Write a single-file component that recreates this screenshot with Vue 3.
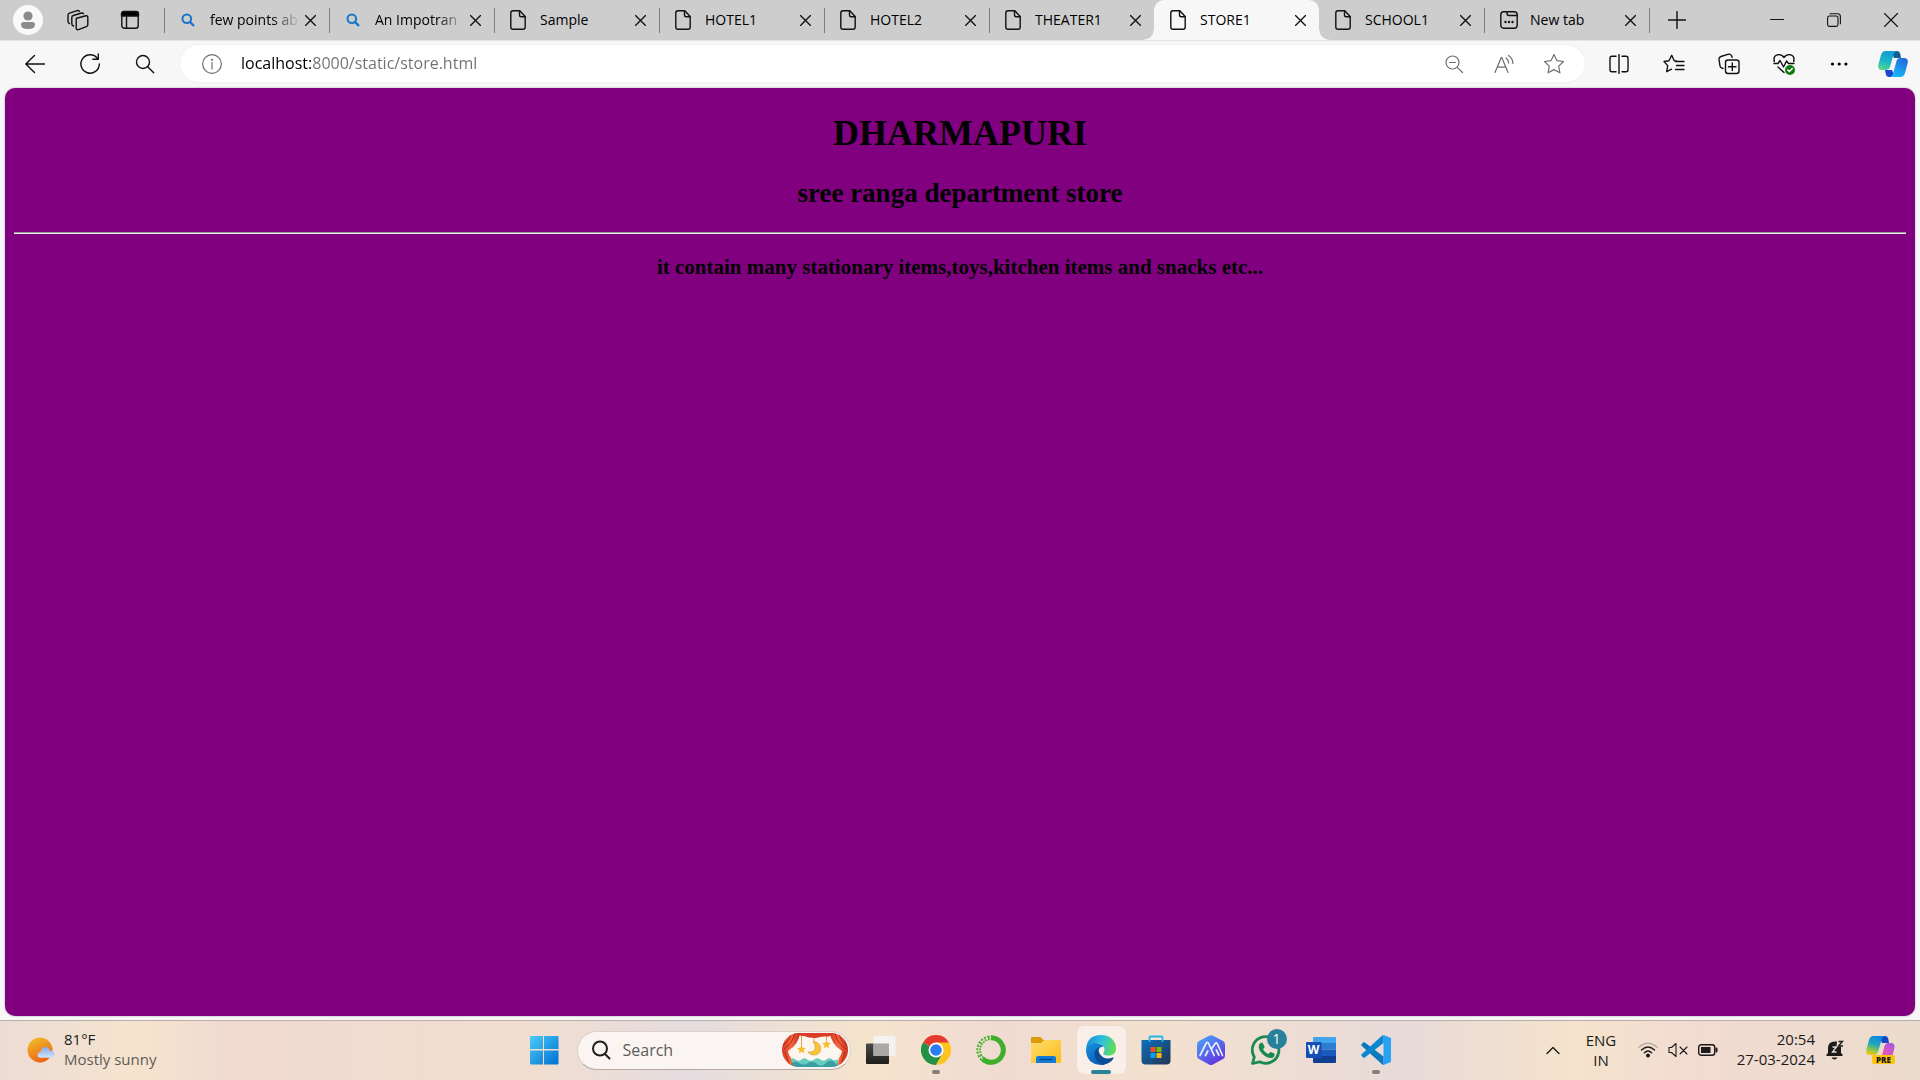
<script setup>
import { ref } from 'vue'

const tabs = ref([
  { title: 'few points ab', kind: 'search' },
  { title: 'An Impotran', kind: 'search' },
  { title: 'Sample', kind: 'file' },
  { title: 'HOTEL1', kind: 'file' },
  { title: 'HOTEL2', kind: 'file' },
  { title: 'THEATER1', kind: 'file' },
  { title: 'STORE1', kind: 'file', active: true },
  { title: 'SCHOOL1', kind: 'file' },
  { title: 'New tab', kind: 'new' }
])

const address = ref('localhost:8000/static/store.html')
const query = ref('')
</script>

<template>
  <div class="screen">
    <header class="tabstrip">
      <button class="strip-btn profile" aria-label="Profile">
        <svg width="30" height="30" viewBox="0 0 30 30">
          <circle cx="15" cy="15" r="15" fill="#f9f9f9" />
          <circle cx="15" cy="11" r="4.6" fill="#8b8b8b" />
          <path d="M8 19.5Q8 17 10.500 17h9Q22 17 22 19.500Q22 24 15 24T8 19.500Z" fill="#8b8b8b" />
        </svg>
      </button>
      <button class="strip-btn workspaces" aria-label="Workspaces">
        <svg class="line" width="22" height="22" viewBox="0 0 22 22">
          <path d="M9.500 9.200 19 6.800q1.800-.3 1.800 1.500v7.500q0 1.400-1.400 1.900l-8 2.900q-2 .5-2.200-1.500V11q0-1.400.3-1.800Z" />
          <path d="M6.500 17q-1.700-.4-1.700-2.200V8.600q0-1.700 1.500-2.100L14.500 4q1.300-.3 2 .7" />
          <path d="M2.500 14.500Q1 14 1 12.300V6.300q0-1.700 1.500-2.200L10 1.600q1.500-.4 2.400.6" />
        </svg>
      </button>
      <button class="strip-btn actions" aria-label="Tab actions menu">
        <svg class="line" width="20" height="20" viewBox="0 0 20 20">
          <rect x="1.800" y="1.800" width="16.400" height="16.400" rx="2.500" />
          <path d="M1.500 6V4Q1.500 1.500 4 1.500h12Q18.500 1.500 18.500 4v2Z" fill="#000" />
          <path d="M6.500 6v12" />
        </svg>
      </button>

      <nav class="tabs" aria-label="Open tabs">
        <div v-for="tab in tabs" :key="tab.title" class="tab" :class="{ active: tab.active }">
          <svg v-if="tab.kind === 'search'" class="favicon" width="16" height="20" viewBox="0 0 16 20">
            <circle cx="6.800" cy="8.800" r="4.300" fill="none" stroke="#1673cf" stroke-width="2" />
            <path d="m10 12 4 4" stroke="#1673cf" stroke-width="2.400" />
          </svg>
          <svg v-else-if="tab.kind === 'file'" class="favicon line" width="16" height="20" viewBox="0 0 16 20">
            <path d="M3 .8h6.800l5.400 5.600V17q0 2.200-2.200 2.200H3Q.8 19.200.8 17V3Q.8.800 3 .8Z" />
            <path d="M9.500 1v4q0 1.800 1.800 1.800H15" />
          </svg>
          <svg v-else class="favicon new line" width="18" height="20" viewBox="0 0 18 20">
            <rect x=".8" y="1.800" width="16.400" height="16.400" rx="3" />
            <path d="M7 2v1.500Q7 5.500 9 5.500h8" />
            <g fill="#111" stroke="none"><circle cx="5.500" cy="12" r="1.200" /><circle cx="9" cy="12" r="1.200" /><circle cx="12.500" cy="12" r="1.200" /></g>
          </svg>
          <span class="tab-title">{{ tab.title }}</span>
          <button class="tab-close" :aria-label="'Close ' + tab.title">
            <svg class="line" width="11" height="11" viewBox="0 0 11 11"><path d="m.5.5 10 10m0-10-10 10" /></svg>
          </button>
        </div>
      </nav>

      <button class="strip-btn new-tab" aria-label="New tab">
        <svg class="line" width="18" height="18" viewBox="0 0 18 18"><path d="M9 .5v17M.5 9h17" /></svg>
      </button>
      <div class="window-controls">
        <button aria-label="Minimize">
          <svg class="line thin" width="14" height="14" viewBox="0 0 14 14"><path d="M.5 6.500h13" /></svg>
        </button>
        <button aria-label="Restore">
          <svg class="line thin" width="14" height="14" viewBox="0 0 14 14">
            <rect x=".6" y="3" width="10.400" height="10.400" rx="1.800" />
            <path d="M3 .8h7.500q2.900 0 2.900 2.900v7" />
          </svg>
        </button>
        <button aria-label="Close window">
          <svg class="line thin" width="14" height="14" viewBox="0 0 14 14"><path d="m.5.5 13 13m0-13-13 13" /></svg>
        </button>
      </div>
    </header>

    <div class="toolbar">
      <button class="tool" aria-label="Back">
        <svg class="line" width="20" height="20" viewBox="0 0 20 20"><path d="M19.500 10H.8M9.500 1.500.8 10l8.700 8.500" /></svg>
      </button>
      <button class="tool" aria-label="Refresh">
        <svg class="line" width="22" height="22" viewBox="0 0 22 22">
          <path d="M18.500 5.500A9.200 9.200 0 1 0 20.300 11" /><path d="M19.300 1v5.200h-5.500" />
        </svg>
      </button>
      <button class="tool" aria-label="Search the web">
        <svg class="line" width="20" height="20" viewBox="0 0 20 20"><circle cx="8" cy="8" r="6.500" /><path d="m12.700 12.700 6 6" /></svg>
      </button>

      <div class="omnibox">
        <button class="info" aria-label="View site information">
          <svg class="line grey" width="22" height="22" viewBox="0 0 22 22">
            <circle cx="11" cy="11" r="9.300" /><path d="M11 9.500v6.500" /><circle cx="11" cy="6.800" r=".5" />
          </svg>
        </button>
        <input v-model="address" class="address" type="text" aria-label="Address bar" spellcheck="false" />
        <button aria-label="Zoom out">
          <svg class="line grey" width="20" height="20" viewBox="0 0 20 20">
            <circle cx="8.500" cy="8.500" r="6.500" /><path d="m13.300 13.300 5.200 5.200M5.500 8.500h6" />
          </svg>
        </button>
        <button aria-label="Read aloud">
          <svg class="line grey" width="22" height="20" viewBox="0 0 22 20">
            <path d="M2 18.500 8.200 3.500h.6l6.200 15M4.500 13.200h8.300" />
            <path d="M13 4q2.500 1.700 2.700 5M15.500 1.500Q19.700 4.300 20 9.500" />
          </svg>
        </button>
        <button aria-label="Add to favorites">
          <svg class="line grey" width="22" height="22" viewBox="0 0 22 22">
            <path d="m11 1.500 2.900 6.100 6.600.9-4.800 4.600 1.200 6.700-5.900-3.200-5.900 3.200 1.200-6.700L1.500 8.500l6.600-.9Z" />
          </svg>
        </button>
      </div>

      <button class="tool" aria-label="Split screen">
        <svg class="line" width="20" height="20" viewBox="0 0 20 20">
          <path d="M7 2.300H3Q1 2.300 1 4.300v11.400q0 2 2 2h4M13 2.300h4q2 0 2 2v11.400q0 2-2 2h-4M10 .5v19" />
        </svg>
      </button>
      <button class="tool" aria-label="Favorites">
        <svg class="line" width="22" height="22" viewBox="0 0 22 22">
          <path d="m13.500 8-2.300-.3L8.700 2.300 6 7.700l-5 .8 3.700 4.100-1 6.100 4.800-2.500M12.500 8.500H21M13.500 12.500H21M12.500 16.500H21M13.500 8l-1 .5" />
        </svg>
      </button>
      <button class="tool" aria-label="Collections">
        <svg class="line" width="22" height="22" viewBox="0 0 22 22">
          <rect x="7.500" y="7" width="13.500" height="13.500" rx="2.500" />
          <path d="M14.300 10v7.500M10.500 13.800H18M5 15.500l-1.500-.6q-1.200-.7-1.500-2L1 6.500Q.7 4.200 3 3.500L10.500 1.200q2-.4 2.900 1.300l.7 1.800" />
        </svg>
      </button>
      <button class="tool" aria-label="Browser essentials">
        <svg class="line" width="22" height="22" viewBox="0 0 22 22">
          <path d="M1.300 8.500Q0 3 4.300 1.800 8.500.8 11 4.500 13.500.8 17.700 1.800 22 3 20.700 8.500M5 14l6 5.500" />
          <path d="M1 10.500h4l2-3 3.500 6.500 3-6 2 2.500H21" />
          <circle cx="17" cy="17" r="5" fill="#107c10" stroke="none" />
          <path d="m14.700 17 1.700 1.600 2.900-3.100" stroke="#fff" />
        </svg>
      </button>
      <button class="tool" aria-label="Settings and more">
        <svg width="18" height="6" viewBox="0 0 18 6"><circle cx="2.500" cy="3" r="1.600" /><circle cx="9.200" cy="3" r="1.600" /><circle cx="15.900" cy="3" r="1.600" /></svg>
      </button>
      <button class="tool copilot" aria-label="Copilot">
        <svg width="30" height="28" viewBox="0 0 30 28">
          <defs>
            <linearGradient id="cpLeft" x1=".6" y1="0" x2=".3" y2="1"><stop offset="0" stop-color="#109bd8" /><stop offset=".55" stop-color="#1cb5c8" /><stop offset="1" stop-color="#58d68d" /></linearGradient>
            <linearGradient id="cpRight" x1=".8" y1="0" x2=".3" y2="1"><stop offset="0" stop-color="#2268dc" /><stop offset="1" stop-color="#19baf8" /></linearGradient>
          </defs>
          <path d="M13 1h6q2.500 0 3.300 3L23 8h-7Z" fill="#125f93" />
          <path d="M7 20h7l3 7h-6q-2.500 0-3.200-3Z" fill="#1a45cf" />
          <path d="M7.500 1H19q-2.500.3-3.300 3.300L12 17q-1 3-4.500 3H4Q-.8 20 .4 14.500L3 5Q4.200 1 7.500 1Z" fill="url(#cpLeft)" />
          <path d="M22.500 27H12q2.300-.4 3-3.300L18.500 11q.9-3 4-3H26q4.800 0 3.600 5.500L27 23q-1.200 4-4.500 4Z" fill="url(#cpRight)" />
        </svg>
      </button>
    </div>

    <main class="page">
      <h1>DHARMAPURI</h1>
      <h2>sree ranga department store</h2>
      <hr />
      <h3>it contain many stationary items,toys,kitchen items and snacks etc...</h3>
    </main>

    <footer class="taskbar">
      <button class="weather">
        <svg width="28" height="28" viewBox="0 0 28 28">
          <defs>
            <linearGradient id="sun" x1=".2" y1="0" x2=".7" y2="1"><stop offset="0" stop-color="#efbd2c" /><stop offset="1" stop-color="#ee5d12" /></linearGradient>
            <linearGradient id="cloud" x1="0" y1="0" x2="0" y2="1"><stop offset="0" stop-color="#84a9ea" /><stop offset="1" stop-color="#d3e4fc" /></linearGradient>
          </defs>
          <circle cx="13" cy="14" r="12.500" fill="url(#sun)" />
          <path d="M13.500 21.800q-3-.2-3-2.800 0-2.500 3.200-2.900Q14.300 11 18.500 11q3.500 0 4.500 3.700 4.600.2 4.600 3.600 0 3.300-3.600 3.500Z" fill="url(#cloud)" />
        </svg>
        <span class="two-line"><span class="temp">81°F</span><span class="sky">Mostly sunny</span></span>
      </button>

      <div class="apps">
        <button class="app" aria-label="Start">
          <svg width="30" height="30" viewBox="0 0 30 30">
            <defs><linearGradient id="win" x1="0" y1="0" x2="30" y2="30" gradientUnits="userSpaceOnUse"><stop offset="0" stop-color="#4bd0fb" /><stop offset="1" stop-color="#006cce" /></linearGradient></defs>
            <path d="M2 1h12v13H1V2Q1 1 2 1Zm13 0h13.500q1 0 1 1v12H15ZM1 15.500h13v14H2q-1 0-1-1Zm14 0h14.500v13q0 1-1 1H15Z" fill="url(#win)" />
          </svg>
        </button>

        <label class="search">
          <svg width="20" height="20" viewBox="0 0 20 20" fill="none" stroke="#1e1e1e" stroke-width="2" stroke-linecap="round">
            <circle cx="9" cy="8.500" r="7" /><path d="m14 14 4.500 4.500" />
          </svg>
          <input v-model="query" type="text" placeholder="Search" aria-label="Search" />
          <svg width="66" height="34" viewBox="0 0 66 34">
            <defs><clipPath id="stage"><rect width="66" height="34" rx="17" /></clipPath>
              <linearGradient id="curtain"><stop offset="0" stop-color="#d93a24" /><stop offset=".5" stop-color="#f6653f" /><stop offset="1" stop-color="#c9301f" /></linearGradient></defs>
            <g clip-path="url(#stage)">
              <rect width="66" height="34" fill="#fdf6ee" />
              <path d="M8 27q3-3.500 6 0 4 2 6-1 3-2 6 1 4 2 7-1 3-2 6 1 4 2 6-1 3-2 6 1 3 1 5-1v9H8Z" fill="#67cbc2" />
              <path d="M8 31q5-4 9-1t9 0 9 1 9-1 9 0 6 1v4H8Z" fill="#3b9ea1" />
              <path d="M19.500 3v10M44.500 3v6M32 3v6" stroke="#d9a45a" />
              <path d="M31 8.500q7 .5 7.800 7-.5 6.500-7.300 6.500-3.500-.2-5.500-3 6.500.8 7.300-4.200.2-3.800-2.300-6.300Z" fill="#f8c53a" stroke="#dd9f24" stroke-width=".7" />
              <path d="m19.500 12 1.300 2.700 3 .4-2.200 2.100.6 3-2.700-1.500-2.700 1.500.6-3-2.200-2.100 3-.4ZM44.500 7l1.300 2.700 3 .4-2.200 2.100.6 3-2.700-1.500-2.700 1.500.6-3-2.200-2.100 3-.4Z" fill="#f8bd2d" />
              <path d="M14 0h38q-1 4-8 3.500Q39 3 34 5 28 5.500 22 3q-6 .5-8-3Z" fill="#dc3d27" />
              <path d="M0 0h18q-1 11-12 18 0 3 3 7l2 9H0Z" fill="url(#curtain)" />
              <path d="M66 0H48q1 11 12 18 0 3-3 7l-2 9h11Z" fill="url(#curtain)" />
              <path d="M13 0Q11 10 2 16M9 0Q8 8 1 12M53 0q2 10 11 16M57 0q1 8 8 12M3 19l5 15M63 19l-5 15" fill="none" stroke="#a92619" stroke-width=".9" />
            </g>
          </svg>
        </label>

        <button class="app" aria-label="Task view">
          <svg width="30" height="30" viewBox="0 0 30 30">
            <defs><linearGradient id="dark" x1="0" y1="0" x2="0" y2="1"><stop offset="0" stop-color="#4a4a48" /><stop offset="1" stop-color="#1e1e1d" /></linearGradient></defs>
            <rect x="0" y="8.500" width="23" height="20.500" rx="1" fill="url(#dark)" />
            <rect x="7.500" y="1" width="22" height="20" rx="1" fill="#f4f4f4" fill-opacity=".9" />
            <rect x="7.500" y="8.500" width="15.500" height="12.500" fill="#aaa9a7" />
          </svg>
        </button>

        <button class="app running" aria-label="Google Chrome">
          <svg width="30" height="30" viewBox="0 0 48 48">
            <path d="M24 24 3.200 12A24 24 0 0 1 44.800 12Z" fill="#e53a2f" />
            <path d="M24 24 3.200 12A24 24 0 0 0 24 48L34.400 30Z" fill="#239145" />
            <path d="M24 12h20.800A24 24 0 0 1 24 48l10.400-18Z" fill="#fcc41f" />
            <circle cx="24" cy="24" r="12" fill="#fff" /><circle cx="24" cy="24" r="9.300" fill="#2b7cf0" />
          </svg>
        </button>

        <button class="app" aria-label="Anaconda Navigator">
          <svg width="30" height="30" viewBox="0 0 30 30" fill="none" stroke="#3eae2b">
            <path d="M15 2.700A12.300 12.300 0 1 1 6.500 23.900" stroke-width="5" />
            <path d="M6.500 23.900A12.300 12.300 0 0 1 15 2.700" stroke-width="4.600" stroke-dasharray="2 1.200" />
            <path d="M6.500 23.900A12.300 12.300 0 0 1 15 2.700" stroke="#f1ddd2" stroke-width="1.200" stroke-dasharray="3 1.600" />
          </svg>
        </button>

        <button class="app" aria-label="File Explorer">
          <svg width="30" height="30" viewBox="0 0 30 30">
            <defs><linearGradient id="folder" x1="0" y1="0" x2="1" y2="1"><stop offset="0" stop-color="#ffdc70" /><stop offset="1" stop-color="#fbbd18" /></linearGradient></defs>
            <path d="M1 2h8.500l3 3H29v6H0V3q0-1 1-1Z" fill="#dc9a08" />
            <path d="M0 8h10l3-3h16q1 0 1 1v21q0 1-1 1H1q-1 0-1-1Z" fill="url(#folder)" />
            <path d="M5 28v-5q0-2 2-2h16q2 0 2 2v5Z" fill="#127bd5" /><path d="M9 24.500h12" stroke="#084a94" stroke-width="1.300" stroke-linecap="round" />
          </svg>
        </button>

        <button class="app current" aria-label="Microsoft Edge">
          <svg width="30" height="30" viewBox="0 0 30 30">
            <defs>
              <linearGradient id="edgeTop" x1="0" y1=".4" x2="1" y2=".6"><stop offset="0" stop-color="#1a8fd6" /><stop offset=".5" stop-color="#2ec1dc" /><stop offset="1" stop-color="#67e04a" /></linearGradient>
              <linearGradient id="edgeLeft" x1="0" y1="0" x2=".5" y2="1"><stop offset="0" stop-color="#1890dc" /><stop offset="1" stop-color="#0a62bd" /></linearGradient>
            </defs>
            <path d="M0 14Q1.200 0 15 0q8 0 12 5t3 10q-1 5.500-7.500 5.500-4.500 0-5.500-2 1.500-1.500 1.500-4 0-5.500-7-6.500Q4 7 0 14Z" fill="url(#edgeTop)" />
            <path d="M0 14Q3 7 10 8q6 .5 8 4-3-1-5 2-2 3-1 8 2 6 7 7.500-2 .5-4 .5Q0 29 0 14Z" fill="url(#edgeLeft)" />
            <path d="M12.500 12.500Q8 15 8.300 19.500 9 27 17 29.800q7-1 10.500-6.300.5-1.500-1-1-5 2-9.500-.3-5-3-4.500-9.700Z" fill="#0d4d96" />
          </svg>
        </button>

        <button class="app" aria-label="Microsoft Store">
          <svg width="30" height="30" viewBox="0 0 30 30">
            <defs><linearGradient id="bag" x1="0" y1="0" x2="1" y2="1"><stop offset="0" stop-color="#0a70bd" /><stop offset="1" stop-color="#253352" /></linearGradient></defs>
            <path d="M.5 5h29v20.500q0 4-4 4h-21q-4 0-4-4Z" fill="url(#bag)" />
            <path d="M8.500 7V2.500q0-1 1-1h11q1 0 1 1V7" fill="none" stroke="#25b5ea" stroke-width="1.800" />
            <path d="M9.500 12h5v5h-5Z" fill="#f25022" /><path d="M15.500 12h5v5h-5Z" fill="#7fba00" />
            <path d="M9.500 18h5v5h-5Z" fill="#00a4ef" /><path d="M15.500 18h5v5h-5Z" fill="#ffb900" />
          </svg>
        </button>

        <button class="app" aria-label="App hub">
          <svg width="30" height="30" viewBox="0 0 30 30">
            <defs><linearGradient id="hex" x1="0" y1="0" x2=".7" y2="1"><stop offset="0" stop-color="#4bacf0" /><stop offset=".5" stop-color="#5472ee" /><stop offset="1" stop-color="#6630e0" /></linearGradient></defs>
            <path d="M13 .7q2-1 4 0l10 5.300q2 1 2 3.500v11q0 2.500-2 3.500l-10 5.400q-2 1-4 0L3 24q-2-1-2-3.500v-11Q1 7 3 6Z" fill="url(#hex)" />
            <path d="M4 20.500 10.300 8q1-1.500 2 0l5.900 12.500M9.500 20.500l2.300-4.500M15.500 14l3.700-5.500q1-1.200 2 0l5.300 12M20.300 15l2.500 5" fill="none" stroke="#e9efff" stroke-width="1.700" stroke-linecap="round" stroke-linejoin="round" />
          </svg>
        </button>

        <button class="app" aria-label="WhatsApp, 1 notification">
          <svg width="30" height="30" viewBox="0 0 30 30">
            <path d="M1.500 28.500 3.300 22A13.300 13.300 0 1 1 8.500 26.800Z" fill="none" stroke="#198a54" stroke-width="2.800" stroke-linejoin="round" />
            <path d="M9.500 8q1.500-1 2.500.5l1.500 3q.2 1-1.500 2.800 2 3.700 5.200 4.700l2-1.800q.6-.4 1.400 0l2.900 1.500q.7 3.800-3.700 4.300-3 .3-7.500-3.300Q8 16 7.700 12q0-3 1.800-4Z" fill="#198a54" />
          </svg>
          <span class="badge">1</span>
        </button>

        <button class="app" aria-label="Word">
          <span class="word">
            <svg width="30" height="28" viewBox="0 0 30 28">
              <path d="M8 1h21q1 0 1 1v5H7V2q0-1 1-1Z" fill="#41a5ee" /><path d="M7 7h23v6.500H7Z" fill="#2b7cd3" />
              <path d="M7 13.500h23V20H7Z" fill="#185abd" /><path d="M7 20h23v6q0 1-1 1H8q-1 0-1-1Z" fill="#103f91" />
              <rect y="6" width="15.500" height="16" rx="1" fill="#164fb3" />
            </svg>
            <b>W</b>
          </span>
        </button>

        <button class="app running" aria-label="Visual Studio Code">
          <svg width="30" height="30" viewBox="0 0 30 30">
            <path d="M22.500 0 30 3v24l-7.500 3Z" fill="#27a2f2" />
            <path d="m3.500 7.200 19 14.300V30q-.8 0-1.500-.7L.6 10.800q-.8-.8 0-1.600l1.600-1.700q.6-.6 1.300-.3Z" fill="#0b79be" />
            <path d="M3.500 22.800 22.500 8V0q-.8 0-1.500.7L.6 19.200q-.8.8 0 1.600l1.600 1.700q.6.600 1.300.3Z" fill="#0b86cf" />
          </svg>
        </button>
      </div>

      <div class="tray">
        <button class="chevron" aria-label="Show hidden icons">
          <svg class="line tray-line" width="14" height="9" viewBox="0 0 14 9"><path d="m1 7.500 6-6 6 6" /></svg>
        </button>
        <button class="lang"><span>ENG</span><span>IN</span></button>
        <button class="status" aria-label="Network">
          <svg class="line tray-line" width="20" height="16" viewBox="0 0 20 16">
            <path d="M.8 5.500q9.200-8.500 18.400 0" stroke="#b9aaa2" /><path d="M3.500 8q6.500-6 13 0M6.300 10.800q3.700-3.500 7.400 0" />
            <circle cx="10" cy="13.500" r="1.300" fill="#1b1b1b" />
          </svg>
        </button>
        <button class="status" aria-label="Volume muted">
          <svg class="line tray-line thin" width="20" height="16" viewBox="0 0 20 16">
            <path d="M1 5.500h2.500L8 1.500v13l-4.500-4H1ZM12 5l7 7m0-7-7 7" />
          </svg>
        </button>
        <button class="status" aria-label="Battery">
          <svg class="line tray-line" width="20" height="12" viewBox="0 0 20 12">
            <rect x=".7" y=".7" width="16" height="10.600" rx="2.500" /><rect x="3" y="3" width="9.500" height="6" fill="#1b1b1b" stroke="none" /><path d="M18.500 4.500v3" stroke-width="2" />
          </svg>
        </button>
        <button class="clock"><span>20:54</span><span>27-03-2024</span></button>
        <button class="bell" aria-label="Notifications, do not disturb">
          <svg width="18" height="20" viewBox="0 0 18 20">
            <path d="M2 13V8q0-6.500 7-6.500h2l-.5 5H15V13l1.500 1.500V16H.5v-1.500ZM5.500 17.500h6q-1 2-3 2t-3-2Z" fill="#1b1b1b" />
            <path d="M12.500 1.500h4l-4 4.500h4.500" fill="none" stroke="#1b1b1b" stroke-width="1.400" /><path d="M6.500 7h4l-4 5h4" fill="none" stroke="#f1ddd0" stroke-width="1.300" />
          </svg>
        </button>
        <button class="copilot-pre" aria-label="Copilot preview">
          <svg width="30" height="28" viewBox="0 0 30 28">
            <defs>
              <linearGradient id="preLeft" x1=".6" y1="0" x2=".3" y2="1"><stop offset="0" stop-color="#0e85e4" /><stop offset=".45" stop-color="#23a7b8" /><stop offset=".75" stop-color="#8cc650" /><stop offset="1" stop-color="#f6c70c" /></linearGradient>
              <linearGradient id="preRight" x1=".8" y1="0" x2=".3" y2="1"><stop offset="0" stop-color="#a457e8" /><stop offset=".6" stop-color="#e45bb0" /><stop offset="1" stop-color="#f77a64" /></linearGradient>
            </defs>
            <path d="M13 0h6q2.500 0 3.300 3L23 7h-7Z" fill="#1747c4" />
            <path d="M7.500 0H19q-2.500.3-3.300 3.300L12 16q-1 3-4.500 3H4Q-.8 19 .4 13.500L3 4Q4.200 0 7.500 0Z" fill="url(#preLeft)" />
            <path d="M22.500 26H12q2.300-.4 3-3.300L18.500 10q.9-3 4-3H25q4.500 0 3.300 5.500L26 22q-1.200 4-3.500 4Z" fill="url(#preRight)" />
          </svg>
          <span class="pre">PRE</span>
        </button>
      </div>
    </footer>
  </div>
</template>

<style>
body {
  margin: 0;
}
</style>

<style scoped>
.screen {
  display: flex;
  flex-direction: column;
  min-height: 100vh;
  background: #f7f7f7;
  color: #000;
  font-family: "Open Sans", "Noto Sans", sans-serif;
}

.screen * {
  box-sizing: border-box;
}

button,
input {
  margin: 0;
  padding: 0;
  border: 0;
  background: none;
  color: inherit;
  font: inherit;
}

button {
  display: flex;
  flex: none;
  align-items: center;
  justify-content: center;
}

input {
  min-width: 0;
  outline: 0;
}

svg {
  display: block;
  flex: none;
}

.line {
  fill: none;
  stroke: #111;
  stroke-width: 1.4;
  stroke-linecap: round;
  stroke-linejoin: round;
}

.thin {
  stroke-width: 1.1;
}

.grey {
  stroke: #6e6e6e;
  stroke-width: 1.2;
}

/* Tab strip */
.tabstrip {
  display: flex;
  height: 40px;
  background: #cdcdcd;
}

.profile {
  width: 56px;
}

.workspaces {
  width: 44px;
}

.actions {
  width: 60px;
  margin-right: 4px;
}

.tabs {
  display: flex;
  flex: 0 1 auto;
  min-width: 0;
}

.tab {
  position: relative;
  display: flex;
  flex: 0 1 165px;
  align-items: center;
  width: 165px;
  min-width: 0;
  padding: 0 13px 0 16px;
  font-size: 14px;
  line-height: 20px;
}

.tab::before,
.tab:last-child::after {
  content: "";
  position: absolute;
  left: 0;
  top: 8px;
  width: 1px;
  height: 25px;
  background: #7d7d7d;
}

.tab:last-child::after {
  left: 100%;
}

.tab.active {
  border-radius: 10px 10px 0 0;
  background: #f7f7f7;
}

.tab.active + .tab::before {
  display: none;
}

.tab.active::before,
.tab.active::after {
  content: "";
  position: absolute;
  top: auto;
  bottom: 0;
  width: 10px;
  height: 10px;
}

.tab.active::before {
  left: -10px;
  background: radial-gradient(circle at 0 0, transparent 9px, #f7f7f7 10px);
}

.tab.active::after {
  right: -10px;
  background: radial-gradient(circle at 100% 0, transparent 9px, #f7f7f7 10px);
}

.tab-title {
  flex: 1;
  min-width: 0;
  margin: 0 5px 0 14px;
  overflow: hidden;
  white-space: nowrap;
  mask-image: linear-gradient(90deg, #000 62px, transparent 90px);
}

.tab:nth-child(n + 3) .tab-title {
  mask-image: none;
}

.favicon.new {
  margin-right: -2px;
}

.new-tab {
  width: 56px;
}

.window-controls {
  display: flex;
  margin-left: auto;
  padding-right: 1px;
}

.window-controls button {
  width: 57px;
}

/* Toolbar */
.toolbar {
  display: flex;
  align-items: center;
  height: 48px;
  padding: 0 0 1px 7px;
  box-shadow: inset 0 1px #e4e4e4;
}

.tool {
  width: 55px;
  height: 40px;
}

.tool.copilot {
  width: 54px;
}

.omnibox {
  display: flex;
  flex: 1;
  align-items: center;
  height: 37px;
  min-width: 0;
  margin: 0 6px 0 8px;
  padding: 0 6px 0 21px;
  border-radius: 19px;
  background: #fff;
  box-shadow: 0 0 2px #e2e2e2;
}

.omnibox button {
  width: 50px;
  height: 36px;
}

.omnibox .info {
  width: 22px;
  margin-right: 18px;
}

.address {
  flex: 1;
  padding-bottom: 2px;
  background: linear-gradient(90deg, #000 70px, #707070 70px);
  background-clip: text;
  color: transparent;
  caret-color: #000;
  font-size: 16px;
  line-height: 24px;
}

/* Web page */
.page {
  flex: 1;
  margin: 0 5px 4px;
  padding: 25px 9px;
  border-radius: 10px;
  background: #800080;
  box-shadow: 0 0 2px #999;
  font-family: "Liberation Serif", "Times New Roman", serif;
  text-align: center;
}

.page h1 {
  margin: 0 0 24px;
  font-size: 36px;
  line-height: 41px;
}

.page h2 {
  margin: 0 0 23px;
  font-size: 27px;
  line-height: 31px;
}

.page hr {
  height: 2px;
  margin: 0 0 21px;
  border: 0;
  border-top: 1px solid #9a9a9a;
  background: #eee;
}

.page h3 {
  margin: 0;
  font-size: 21px;
  line-height: 24px;
}

/* Taskbar */
.taskbar {
  display: grid;
  grid-template-columns: 1fr auto 1fr;
  height: 60px;
  padding-bottom: 1px;
  border-top: 1px solid #b9afaa;
  background: linear-gradient(90deg, #ecdcd6, #f5e4cd 7%, #f0dad1 12%, #f1decf 27%, #e5dcdf 36%, #f5e4cc 45%, #f0dbd2 52%, #f3e1cf 60%, #e8dad8 73%, #f5e3cc 82%, #f1dbd2 89%, #ecdccd);
  color: #1b1b1b;
  font-size: 15px;
  line-height: 20px;
}

.weather {
  justify-self: start;
  gap: 9px;
  padding-left: 27px;
}

.two-line,
.lang,
.clock {
  display: flex;
  flex-direction: column;
}

.two-line,
.clock {
  padding-bottom: 2px;
}

.two-line {
  align-items: flex-start;
}

.sky {
  color: #5f5a57;
}

.apps {
  display: flex;
  align-items: center;
}

.app {
  position: relative;
  width: 55px;
  height: 48px;
}

.running::after,
.current::after {
  content: "";
  position: absolute;
  bottom: 0;
  width: 8px;
  height: 4px;
  border-radius: 2px;
  background: #8a7e79;
}

.current::after {
  width: 20px;
  background: #27849a;
}

.current::before {
  content: "";
  position: absolute;
  inset: 0 3px;
  border-radius: 6px;
  background: #f9efe8;
  box-shadow: 0 0 1px #cfc1b9;
}

.current svg {
  position: relative;
}

.search {
  display: flex;
  align-items: center;
  width: 274px;
  height: 39px;
  margin: 0 3px 0 5px;
  padding: 0 2px 0 13px;
  border: 1px solid #ddd0c9;
  border-bottom-color: #b5aaa4;
  border-radius: 20px;
  background: #faf5f2;
}

.search input {
  flex: 1;
  margin-left: 12px;
  font-size: 16px;
}

.search input::placeholder {
  color: #5f5b59;
  opacity: 1;
}

.badge {
  position: absolute;
  top: 3px;
  right: 7px;
  width: 20px;
  height: 20px;
  border-radius: 50%;
  background: #27819a;
  color: #fff;
  font-size: 14px;
}

.word {
  position: relative;
}

.word b {
  position: absolute;
  left: 0;
  top: 4px;
  width: 15px;
  color: #fff;
  font-size: 12px;
  text-align: center;
}

.tray {
  display: flex;
  justify-self: end;
  padding-right: 12px;
}

.chevron {
  width: 32px;
}

.lang {
  width: 64px;
}

.status {
  width: 30px;
}

.tray-line {
  stroke: #1b1b1b;
}

.clock {
  align-items: flex-end;
  width: 92px;
  margin-right: 2px;
}

.bell {
  width: 36px;
}

.copilot-pre {
  position: relative;
  width: 55px;
}

.pre {
  position: absolute;
  left: 19px;
  bottom: 15px;
  width: 23px;
  border-radius: 2px;
  background: #fbc50d;
  font-size: 8px;
  font-weight: 800;
  line-height: 9px;
  text-align: center;
}
</style>
